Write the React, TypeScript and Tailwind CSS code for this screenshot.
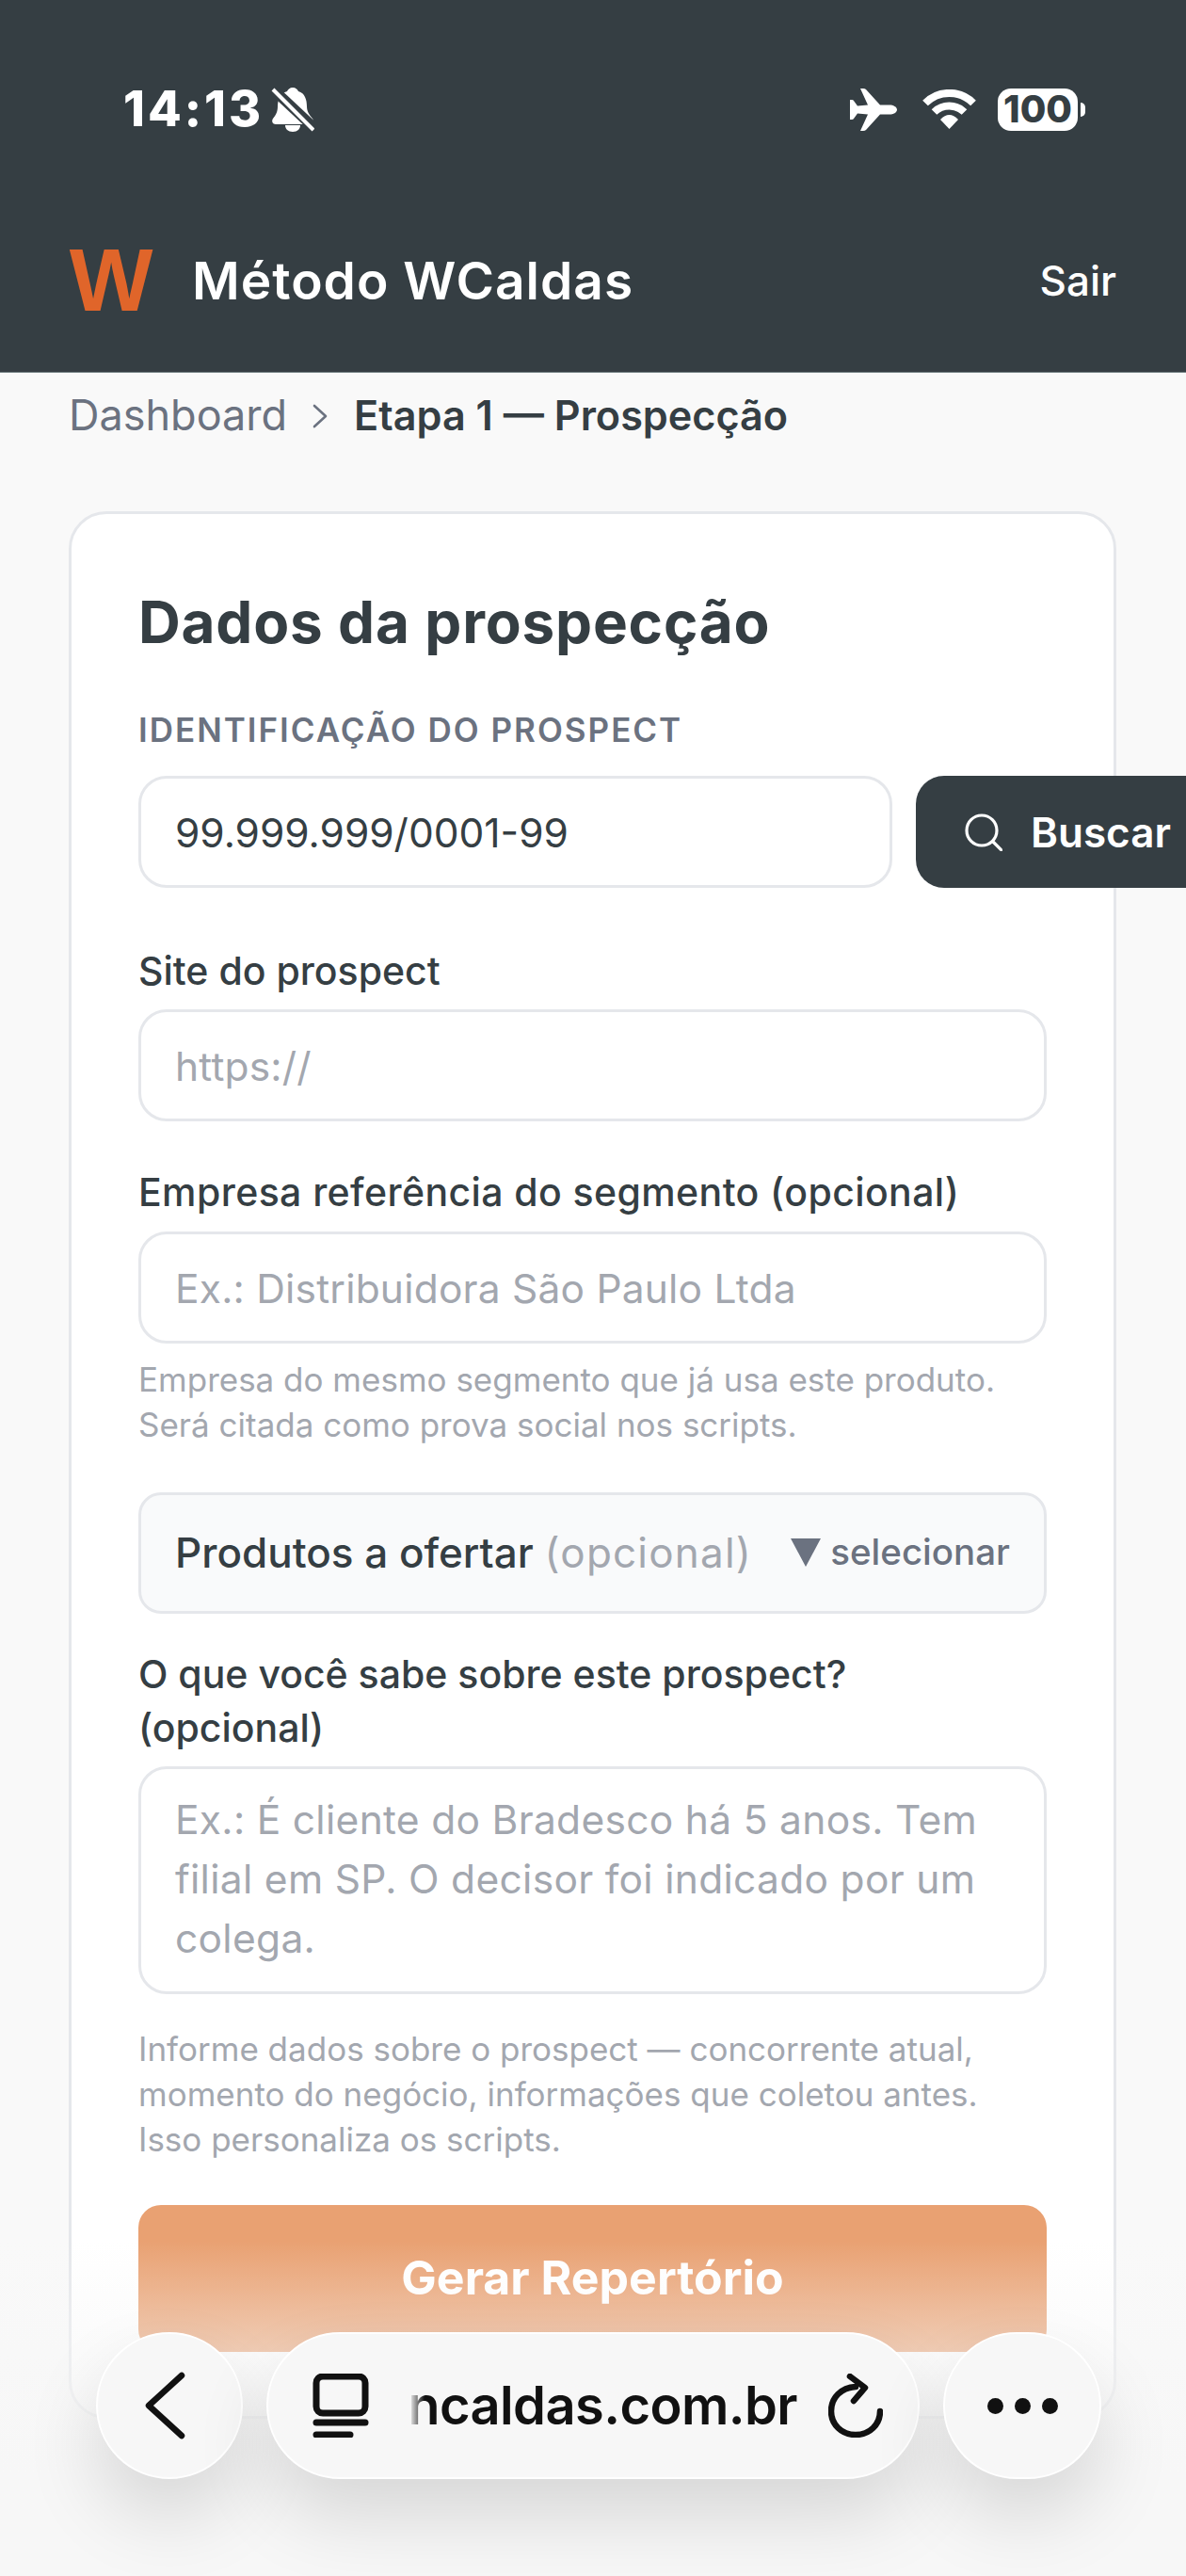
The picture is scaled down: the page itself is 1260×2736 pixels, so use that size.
const font = { fontFamily: "Inter, 'Noto Sans', sans-serif" };

function BellSlash() {
  return (
    <svg width="46" height="48" viewBox="0 0 46 48" className="ml-[8px] shrink-0">
      <path
        d="M23 1c3 0 5 2 6 4 7 2 9 9 9 16 0 6 3 9 6 13 2 3 0 6-3 6H5c-3 0-5-3-3-6 3-4 5-7 5-13 0-7 3-14 10-16 1-2 3-4 6-4z"
        fill="#fff"
      />
      <path d="M15 41h16c0 4-3 7-8 7s-8-3-8-7z" fill="#fff" />
      <path d="M-1 0L46 44" stroke="#353E43" strokeWidth="11" />
      <path d="M2 3L45 46" stroke="#fff" strokeWidth="4" />
    </svg>
  );
}

function Airplane() {
  return (
    <svg width="50" height="45" viewBox="0 0 50 45" className="shrink-0">
      <path
        d="M50 22.5C50 19.5 46 17.5 42 17.5H32L17 1Q16 0 14 0H11L19 17.5L8 18.5L4 13Q3.5 12 2 12H0V33H2Q3.5 33 4 32L8 26.5L19 27.5L11 45H14Q16 45 17 44L32 27.5H42C46 27.5 50 25.5 50 22.5Z"
        fill="#fff"
      />
    </svg>
  );
}

function Wifi() {
  return (
    <svg width="57" height="42" viewBox="0 0 57 42" className="shrink-0" fill="none">
      <path d="M3 14.5A36 36 0 0 1 54 14.5" stroke="#fff" strokeWidth="8" />
      <path d="M12.5 24A23 23 0 0 1 44.5 24" stroke="#fff" strokeWidth="8" />
      <path d="M28.5 42L19 32Q28.5 22 38 32Z" fill="#fff" />
    </svg>
  );
}

function SearchIcon() {
  return (
    <svg width="40" height="40" viewBox="0 0 40 40" fill="none" stroke="#fff" strokeWidth="3.2" strokeLinecap="round" className="shrink-0">
      <circle cx="18" cy="18" r="16" />
      <path d="M30 30L39 39" />
    </svg>
  );
}

function TabsIcon() {
  return (
    <svg width="60" height="68" viewBox="0 0 60 68" fill="none" stroke="#111" strokeLinecap="round" className="shrink-0">
      <rect x="4" y="3" width="52" height="39" rx="7" strokeWidth="7" />
      <path d="M4 52H56" strokeWidth="7" />
      <path d="M4 65H40" strokeWidth="7" />
    </svg>
  );
}

function ReloadIcon() {
  return (
    <svg width="58" height="68" viewBox="0 0 58 68" fill="none" stroke="#111" strokeWidth="6.5" strokeLinecap="round" strokeLinejoin="round" className="shrink-0">
      <path d="M29 14C14 15 3 25 3 40c0 14 11 25 26 25s26-11 26-25" />
      <path d="M23 3L39 15L27 29" />
    </svg>
  );
}

function Field({ children, dark }: { children: React.ReactNode; dark?: boolean }) {
  return (
    <div
      className={`flex h-[119px] items-center rounded-[30px] border-[3px] border-[#e5e7eb] bg-white px-[36px] pt-[2px] text-[42.5px] ${
        dark ? "text-[#353E43]" : "tracking-[0.2px] text-[#a3a7af]"
      }`}
    >
      {children}
    </div>
  );
}

function Label({ children }: { children: React.ReactNode }) {
  return <div className="text-[41px] font-medium leading-[57px] text-[#353E43]">{children}</div>;
}

function Hint({ children }: { children: React.ReactNode }) {
  return <p className="text-[35px] leading-[48px] text-[#a3a7af]">{children}</p>;
}

export default function App() {
  return (
    <div className="relative h-[2736px] w-[1260px] overflow-hidden bg-[#f9f9f9]" style={font}>
      <header className="h-[396px] border-b border-[#7d8a8c] bg-[#353E43]">
        <div className="h-[92px]" />
        <div className="flex h-[48px] items-center justify-between pl-[131px] pr-[107px]">
          <div className="flex items-center">
            <span className="text-[52px] font-extrabold leading-none tracking-[3px] text-white">14:13</span>
            <BellSlash />
          </div>
          <div className="flex items-center">
            <Airplane />
            <div className="ml-[27px]">
              <Wifi />
            </div>
            <div className="ml-[23px] flex h-[45px] w-[85px] items-center justify-center rounded-[14px] bg-white text-[40px] font-extrabold leading-none text-[#353E43]">
              100
            </div>
            <div className="ml-[3px] h-[15px] w-[5px] rounded-r-full bg-white" />
          </div>
        </div>
        <div className="mt-[120px] flex items-center justify-between pl-[73px] pr-[74px]">
          <div className="flex items-center">
            <span
              className="w-[90px] text-center text-[94px] font-bold leading-[76px] text-[#E0652A]"
              style={{ fontFamily: "'Liberation Sans', sans-serif" }}
            >
              W
            </span>
            <span className="ml-[41px] text-[55px] font-semibold leading-none tracking-[1px] text-white">Método WCaldas</span>
          </div>
          <span className="text-[44px] font-medium leading-none text-white">Sair</span>
        </div>
      </header>

      <main className="pl-[73px] pr-[74px]">
        <nav className="flex h-[90px] items-center text-[45px]">
          <span className="text-[#6b7280]">Dashboard</span>
          <svg width="18" height="26" viewBox="0 0 18 26" fill="none" stroke="#6b7280" strokeWidth="2.6" strokeLinecap="round" strokeLinejoin="round" className="ml-[26px] mt-[2px] shrink-0">
            <path d="M3 2L15 13L3 24" />
          </svg>
          <span className="ml-[27px] text-[43.2px] font-semibold text-[#353E43]">Etapa 1 — Prospecção</span>
        </nav>

        <section className="mt-[57px] h-[2026px] rounded-[40px] border-[3px] border-[#e5e7eb] bg-white px-[71px] pt-[79px]">
          <h2 className="text-[62px] font-bold leading-[72px] tracking-[0.8px] text-[#353E43]">Dados da prospecção</h2>
          <div className="mt-[56px] text-[35px] font-semibold uppercase leading-[44px] tracking-[2px] text-[#6b7280]">
            Identificação do prospect
          </div>

          <div className="mt-[27px] flex gap-[25px]">
            <div className="w-[801px] shrink-0">
              <Field dark>99.999.999/0001-99</Field>
            </div>
            <button className="flex h-[119px] shrink-0 items-center gap-[30px] whitespace-nowrap rounded-[30px] bg-[#353E43] pl-[52px] pr-[60px] text-[44px] font-semibold text-white">
              <SearchIcon />
              Buscar
            </button>
          </div>

          <div className="mt-[60px]">
            <Label>Site do prospect</Label>
            <div className="mt-[12px]">
              <Field>https://</Field>
            </div>
          </div>

          <div className="mt-[47px]">
            <Label>
              <span className="tracking-[0.4px]">Empresa referência do segmento (opcional)</span>
            </Label>
            <div className="mt-[13px]">
              <Field>Ex.: Distribuidora São Paulo Ltda</Field>
            </div>
            <div className="mt-[14px]">
              <Hint>
                Empresa do mesmo segmento que já usa este produto.
                <br />
                Será citada como prova social nos scripts.
              </Hint>
            </div>
          </div>

          <div className="mt-[48px] flex h-[129px] items-center justify-between rounded-[24px] border-[3px] border-[#e5e7eb] bg-[#f9fafb] pb-[2px] px-[36px]">
            <div className="whitespace-nowrap text-[44px] font-medium text-[#353E43]">
              Produtos a ofertar <span className="font-normal tracking-[1.2px] text-[#a3a7af]">(opcional)</span>
            </div>
            <div className="flex items-center gap-[10px] whitespace-nowrap text-[38.5px] font-medium text-[#6b7280]">
              <svg width="32" height="30" viewBox="0 0 32 30" className="shrink-0">
                <path d="M0 0H32L16 30Z" fill="#6b7280" />
              </svg>
              selecionar
            </div>
          </div>

          <div className="mt-[36px]">
            <Label>
              O que você sabe sobre este prospect?
              <br />
              (opcional)
            </Label>
            <div className="mt-[12px] h-[242px] rounded-[30px] border-[3px] border-[#e5e7eb] bg-white px-[36px] pt-[22px] text-[42.5px] leading-[63px] tracking-[0.3px] text-[#a3a7af]">
              Ex.: É cliente do Bradesco há 5 anos. Tem
              <br />
              filial em SP. O decisor foi indicado por um
              <br />
              colega.
            </div>
            <div className="mt-[34px]">
              <Hint>
                Informe dados sobre o prospect — concorrente atual,
                <br />
                momento do negócio, informações que coletou antes.
                <br />
                Isso personaliza os scripts.
              </Hint>
            </div>
          </div>

          <button className="mt-[46px] flex h-[156px] w-full items-center justify-center rounded-[24px] bg-[#E9A172] pb-[2px] text-[50px] font-bold text-white">
            Gerar Repertório
          </button>
        </section>
      </main>

      <div className="pointer-events-none absolute inset-x-0 bottom-0 top-[2380px] bg-[linear-gradient(to_bottom,rgba(247,247,247,0)_0%,rgba(247,247,247,0.5)_33%,rgba(247,247,247,1)_70%)]" />

      <div className="absolute left-[102px] top-[2477px] flex gap-[25px]">
        <div className="flex h-[156px] w-[156px] items-center justify-center rounded-full border-2 border-white bg-[#f7f7f7] pr-[10px] shadow-[0_40px_80px_rgba(0,0,0,0.13)]">
          <svg width="44" height="72" viewBox="0 0 44 72" fill="none" stroke="#111" strokeWidth="6.5" strokeLinecap="round" strokeLinejoin="round">
            <path d="M40 4L5 36L40 68" />
          </svg>
        </div>
        <div className="flex h-[156px] w-[694px] items-center rounded-[78px] border-2 border-white bg-[#f7f7f7] pl-[47px] shadow-[0_40px_80px_rgba(0,0,0,0.13)]">
          <TabsIcon />
          <div className="relative ml-[43px] flex w-[412px] justify-end overflow-hidden whitespace-nowrap text-[56px] font-semibold leading-none tracking-[-0.6px] text-[#111]">
            ncaldas.com.br
            <div className="absolute inset-y-0 left-0 w-[16px] bg-gradient-to-r from-[#f7f7f7] to-transparent" />
          </div>
          <div className="ml-[33px]">
            <ReloadIcon />
          </div>
        </div>
        <div className="flex h-[156px] w-[168px] items-center justify-center gap-[12px] rounded-full border-2 border-white bg-[#f7f7f7] shadow-[0_40px_80px_rgba(0,0,0,0.13)]">
          <span className="h-[17px] w-[17px] rounded-full bg-[#111]" />
          <span className="h-[17px] w-[17px] rounded-full bg-[#111]" />
          <span className="h-[17px] w-[17px] rounded-full bg-[#111]" />
        </div>
      </div>
    </div>
  );
}
